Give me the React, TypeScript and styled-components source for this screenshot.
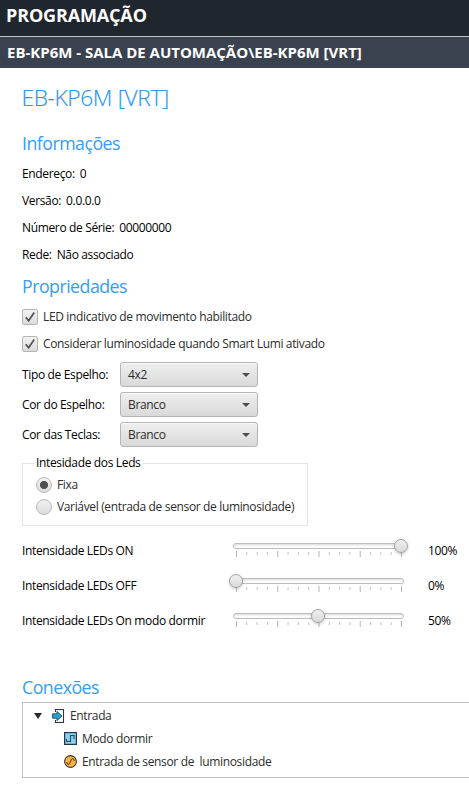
import React from 'react';
import styled, { createGlobalStyle } from 'styled-components';

const GlobalStyle = createGlobalStyle`
  * { box-sizing: border-box; }
  html, body { margin: 0; padding: 0; background: #fff; overflow: hidden; }
  body {
    font-family: "Open Sans", "Noto Sans", sans-serif;
    font-size: 12px;
    letter-spacing: -0.35px;
    color: #000;
  }
`;

const Page = styled.div`
  display: flex;
  flex-direction: column;
  width: 469px;
  height: 789px;
  overflow: hidden;
  background: #fff;
`;

const Header = styled.header`
  flex: none;
  height: 37px;
  padding-left: 6px;
  border-bottom: 1px solid #c6c3bc;
  background: #1f262d;
  color: #fff;
  font-size: 18px;
  font-weight: 700;
  line-height: 31px;
  letter-spacing: -0.15px;
`;

const SubHeader = styled.div`
  flex: none;
  height: 31px;
  padding-left: 7px;
  background: #3a414f;
  color: #fff;
  font-size: 15px;
  font-weight: 700;
  line-height: 31px;
  letter-spacing: -0.01px;
`;

const Content = styled.main`
  display: flex;
  flex-direction: column;
  padding: 14px 0 0 22px;
`;

const Title = styled.h1`
  margin: 0 0 17px -0.5px;
  color: #2a98f6;
  font-size: 22.7px;
  font-weight: 300;
  line-height: 32px;
  letter-spacing: -0.35px;
  -webkit-text-stroke: 0.2px #2a98f6;
`;

const SectionTitle = styled.h2`
  margin: 0;
  color: #359df7;
  font-size: 17.8px;
  font-weight: 400;
  line-height: 25px;
  letter-spacing: -0.53px;
`;

const InfoList = styled.div`
  display: flex;
  flex-direction: column;
  margin: 4px 0 6px;
`;

const InfoRow = styled.div`
  display: flex;
  gap: 5px;
  height: 27px;
  line-height: 27px;
`;

const CheckRow = styled.label`
  display: flex;
  align-items: flex-start;
  height: 27px;
  padding-top: 5px;
  gap: 5px;
  color: #2c2c2c;
  line-height: 16px;
`;

const CheckBox = styled.span`
  display: flex;
  align-items: center;
  justify-content: center;
  flex: none;
  width: 16px;
  height: 16px;
  border: 1px solid #b5b5b5;
  border-radius: 2px;
  background: linear-gradient(#f2f2f2, #dcdcdc);
`;

const Checks = styled.div`
  padding-top: 5px;
`;

const Fields = styled.div`
  display: flex;
  flex-direction: column;
  gap: 5px;
  padding-top: 4px;
`;

const Field = styled.div`
  display: grid;
  grid-template-columns: 98px 138px;
  height: 25px;
  line-height: 25px;
`;

const Select = styled.div`
  display: flex;
  align-items: center;
  justify-content: space-between;
  height: 25px;
  padding: 0 7px 0 7px;
  border: 1px solid #b5b5b5;
  border-radius: 3px;
  background: linear-gradient(#efefef, #d9d9d9);
  box-shadow: inset 0 1px 0 #fafafa;
  color: #2c2c2c;
  line-height: 23px;
`;

const Group = styled.fieldset`
  display: flex;
  flex-direction: column;
  gap: 6px;
  width: 286px;
  height: 70px;
  margin: 9px 0 0;
  padding: 7px 0 0 13px;
  border: 1px solid #e4e4e4;
`;

const Legend = styled.legend`
  margin-left: -1px;
  padding: 0 1px;
  line-height: 14px;
  height: 14px;
`;

const RadioRow = styled.label`
  display: flex;
  align-items: center;
  gap: 5px;
  height: 16px;
  color: #2c2c2c;
  line-height: 16px;
`;

const Radio = styled.span<{ $on?: boolean }>`
  flex: none;
  width: 16px;
  height: 16px;
  border: 1px solid #b9b9b9;
  border-radius: 50%;
  background: ${(p) =>
    p.$on
      ? 'radial-gradient(circle, #4f4f4f 0 3.7px, transparent 4.4px), linear-gradient(#f2f2f2, #dcdcdc)'
      : 'linear-gradient(#f0f0f0, #dddddd)'};
`;

const Sliders = styled.div`
  display: flex;
  flex-direction: column;
  padding-top: 7px;
`;

const SliderRow = styled.div`
  display: grid;
  grid-template-columns: 211px 171px 1fr;
  height: 35px;
  line-height: 35px;
`;

const SliderBody = styled.div`
  padding-top: 10px;
`;

const Track = styled.div`
  height: 6px;
  margin-bottom: 2px;
  border: 1px solid #bdbdbd;
  border-radius: 3px;
  background: linear-gradient(#dedede, #fdfdfd 60%);
`;

const Rail = styled.div`
  position: relative;
  margin: 0 2.5px 0 2px;
`;

const Thumb = styled.span`
  position: absolute;
  top: -5px;
  width: 14px;
  height: 14px;
  margin-left: -6px;
  border: 1px solid #a2a2a2;
  border-radius: 50%;
  background: linear-gradient(#f0f0f0, #d9d9d9);
  box-shadow: 0 1px 3px rgba(0, 0, 0, 0.22);
`;

const Ticks = styled.svg`
  display: block;
`;

const Percent = styled.span`
  padding-left: 24px;
`;

const Connections = styled.section`
  padding-top: 37px;
`;

const Tree = styled.div`
  height: 76px;
  margin-top: 2px;
  padding-top: 1px;
  border: 1px solid #c3c3c3;
  border-right: 0;
  color: #2c2c2c;
`;

const TreeRow = styled.div<{ $level: number }>`
  display: flex;
  align-items: center;
  height: 23px;
  padding-left: ${(p) => (p.$level ? 41 : 11)}px;
  line-height: 23px;
  white-space: pre;

  svg { flex: none; margin-right: 5px; }
`;

const Arrow = styled.svg`
  && { margin-right: 10px; }
`;

const CheckMark = () => (
  <svg width="12" height="12" viewBox="0 0 12 12">
    <path d="M1.8 6.2 L4.6 9.8 L10.2 1.6" fill="none" stroke="#555" strokeWidth="1.8" />
  </svg>
);

const Caret = () => (
  <svg width="8" height="4" viewBox="0 0 8 4">
    <path d="M0 0H8L4 4Z" fill="#4d4d4d" />
  </svg>
);

const EntryIcon = () => (
  <svg width="13" height="14" viewBox="0 0 13 14">
    <path d="M3.5 3V.5H11.5V13.5H3.5V11" fill="none" stroke="#2b3443" strokeWidth="1.1" />
    <path d="M.6 4.8H5V2.4L10 7L5 11.6V9.2H.6Z" fill="#27a3cd" stroke="#234a60" strokeWidth=".9" />
  </svg>
);

const DigitalIcon = () => (
  <svg width="13" height="13" viewBox="0 0 13 13">
    <rect x=".6" y=".6" width="11.8" height="11.8" fill="#84d3f6" stroke="#2b3443" strokeWidth="1.2" />
    <path d="M2.5 7V9.5H6.5V3.5H10V7" fill="none" stroke="#2f4a5c" strokeWidth="1.1" />
  </svg>
);

const AnalogIcon = () => (
  <svg width="13" height="13" viewBox="0 0 13 13">
    <circle cx="6.5" cy="6.5" r="5.9" fill="#fdb53c" stroke="#3b3d42" strokeWidth="1.1" />
    <path
      d="M2.8 7C3 9.8 5.3 9.8 6 7.6L7 5.2C7.8 3 10 3.2 10.2 6"
      fill="none"
      stroke="#5a4628"
      strokeWidth="1.1"
    />
  </svg>
);

const info = [
  ['Endereço:', '0'],
  ['Versão:', '0.0.0.0'],
  ['Número de Série:', '00000000'],
  ['Rede:', 'Não associado'],
];

const checks = [
  'LED indicativo de movimento habilitado',
  'Considerar luminosidade quando Smart Lumi ativado',
];

const fields = [
  ['Tipo de Espelho:', '4x2'],
  ['Cor do Espelho:', 'Branco'],
  ['Cor das Teclas:', 'Branco'],
];

const sliders = [
  { label: 'Intensidade LEDs ON', value: 100 },
  { label: 'Intensidade LEDs OFF', value: 0 },
  { label: 'Intensidade LEDs On modo dormir', value: 50 },
];

const Slider = ({ value }: { value: number }) => (
  <SliderBody>
    <Track>
      <Rail>
        <Thumb style={{ left: `calc(${value}% - 1px)` }} />
      </Rail>
    </Track>
    <Ticks width="171" height="6" viewBox="0 0 171 6">
      {Array.from({ length: 17 }, (_, i) => {
        const major = i % 4 === 0;
        return (
          <rect
            key={i}
            x={3 + i * 10.31}
            y={major ? 0 : 1}
            width="1"
            height={major ? 6 : 3}
            fill={major ? '#b4b4b4' : '#c4c4c4'}
          />
        );
      })}
    </Ticks>
  </SliderBody>
);

export default function App() {
  return (
    <Page>
      <GlobalStyle />
      <Header>PROGRAMAÇÃO</Header>
      <SubHeader>EB-KP6M - SALA DE AUTOMAÇÃO\EB-KP6M [VRT]</SubHeader>
      <Content>
        <Title>EB-KP6M [VRT]</Title>
        <SectionTitle>Informações</SectionTitle>
        <InfoList>
          {info.map(([name, value]) => (
            <InfoRow key={name}>
              <span>{name}</span>
              <span>{value}</span>
            </InfoRow>
          ))}
        </InfoList>
        <SectionTitle>Propriedades</SectionTitle>
        <Checks>
          {checks.map((text) => (
            <CheckRow key={text}>
              <CheckBox><CheckMark /></CheckBox>
              {text}
            </CheckRow>
          ))}
        </Checks>
        <Fields>
          {fields.map(([name, value]) => (
            <Field key={name}>
              <span>{name}</span>
              <Select>{value}<Caret /></Select>
            </Field>
          ))}
        </Fields>
        <Group>
          <Legend>Intesidade dos Leds</Legend>
          <RadioRow><Radio $on />Fixa</RadioRow>
          <RadioRow><Radio />Variável (entrada de sensor de luminosidade)</RadioRow>
        </Group>
        <Sliders>
          {sliders.map(({ label, value }) => (
            <SliderRow key={label}>
              <span>{label}</span>
              <Slider value={value} />
              <Percent>{value}%</Percent>
            </SliderRow>
          ))}
        </Sliders>
        <Connections>
          <SectionTitle>Conexões</SectionTitle>
          <Tree>
            <TreeRow $level={0}>
              <Arrow width="8" height="6" viewBox="0 0 8 6"><path d="M0 0H8L4 6Z" fill="#2b2b2b" /></Arrow>
              <EntryIcon />Entrada
            </TreeRow>
            <TreeRow $level={1}><DigitalIcon />Modo dormir</TreeRow>
            <TreeRow $level={1}><AnalogIcon />{'Entrada de sensor de  luminosidade'}</TreeRow>
          </Tree>
        </Connections>
      </Content>
    </Page>
  );
}
